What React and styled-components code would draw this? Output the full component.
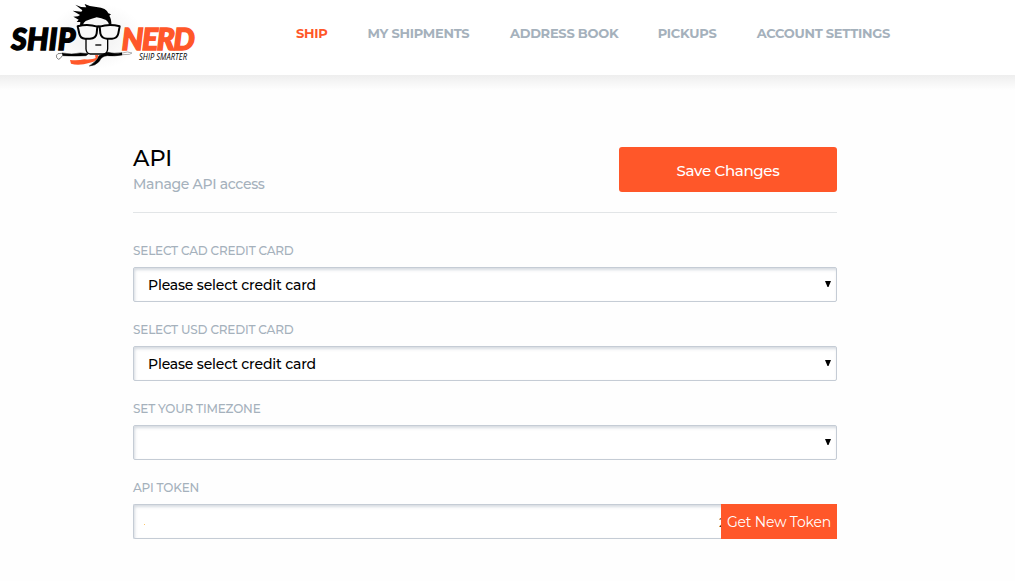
import React from "react";
import styled, { createGlobalStyle } from "styled-components";

const GlobalStyle = createGlobalStyle`
  *, *::before, *::after { box-sizing: border-box; }
  body {
    margin: 0;
    background: #fefefe;
    font-family: Montserrat, Inter, "Liberation Sans", sans-serif;
    color: #000;
  }
`;

const Page = styled.div`
  min-height: 581px;
  overflow: hidden;
`;

const Header = styled.header`
  display: flex;
  align-items: flex-start;
  height: 75px;
  background: #fff;
`;

const HeaderShade = styled.div`
  height: 15px;
  background: linear-gradient(#eeeeee, #fefefe);
`;

const LogoImage = styled.svg`
  display: block;
  flex: none;
  width: 200px;
  height: 75px;
`;

const Nav = styled.nav`
  display: flex;
  gap: 40px;
  margin-left: 96px;
  padding-top: 24px;
`;

const NavLink = styled.a`
  font-size: 13px;
  font-weight: 700;
  line-height: 19px;
  white-space: nowrap;
  width: ${(p) => p.$width}px;
  letter-spacing: -0.27px;
  color: ${(p) => (p.$active ? "#ff5729" : "#a5b1bc")};
`;

const Main = styled.main`
  width: 704px;
  margin: 57px 0 0 133px;
`;

const TitleBar = styled.div`
  display: flex;
  justify-content: space-between;
  height: 66px;
  border-bottom: 1px solid #e2e5e7;
`;

const Title = styled.h1`
  margin: 0;
  font-size: 22.4px;
  font-weight: 500;
  line-height: 22px;
`;

const Subtitle = styled.p`
  margin: 5px 0 0;
  font-size: 14px;
  font-weight: 500;
  line-height: 21px;
  letter-spacing: -0.3px;
  color: #a5b1bc;
`;

const SaveButton = styled.button`
  width: 218px;
  height: 45px;
  padding: 2px 0 0;
  border: 0;
  border-radius: 3px;
  background: #ff5729;
  color: #fff;
  font: 500 15px Montserrat, Inter, sans-serif;
  letter-spacing: -0.32px;
`;

const Field = styled.div`
  display: flex;
  flex-direction: column;
  height: 79px;
`;

const Form = styled.form`
  padding-top: 29px;
`;

const Label = styled.label`
  height: 25px;
  font-size: 12px;
  font-weight: 500;
  line-height: 17px;
  letter-spacing: -0.18px;
  color: #a5b1bc;
`;

const Control = styled.div`
  display: flex;
  align-items: center;
  justify-content: space-between;
  height: 35px;
  padding: 0 5px 0 14px;
  border: 1px solid #c5ccd5;
  border-radius: 2px;
  background: #fff;
  box-shadow: inset 1px 2px 3px rgba(120, 135, 155, 0.3);
  font-size: 14px;
  font-weight: 500;
  letter-spacing: -0.18px;
`;

const TokenControl = styled(Control)`
  padding: 0;
  border-right: 0;
`;

const Caret = styled.svg`
  width: 6px;
  height: 6px;
  margin-bottom: 2px;
`;

const TokenStart = styled.span`
  width: 1px;
  height: 1px;
  margin: 5px 0 0 10px;
  background: #ffc766;
`;

const TokenEnd = styled.span`
  width: 2px;
  margin-left: auto;
  overflow: hidden;
  font-size: 13px;
  font-weight: 400;
  color: #333;
`;

const TokenButton = styled.button`
  width: 116px;
  height: 35px;
  padding: 1px 0 0;
  border: 0;
  background: #ff5729;
  color: #fff;
  font: 400 14px Montserrat, Inter, sans-serif;
  letter-spacing: -0.17px;
  white-space: nowrap;
`;

function Logo() {
  return (
    <LogoImage viewBox="0 0 200 75" role="img" aria-label="Ship Nerd">
      <defs>
        <radialGradient id="halo">
          <stop offset="0.4" stopColor="#f5f5f5" />
          <stop offset="1" stopColor="#fff" />
        </radialGradient>
      </defs>
      <ellipse cx="96" cy="36" rx="47" ry="33" fill="url(#halo)" />
      <g fontFamily="Lato, sans-serif" fontStyle="italic" fontWeight="900" fontSize="30" strokeWidth="1.4">
        <text x="11.3" y="49.7" textLength="64" lengthAdjust="spacing" stroke="#000">SHIP</text>
        <text x="121.8" y="49.7" textLength="73" lengthAdjust="spacing" fill="#ff5729" stroke="#ff5729">NERD</text>
      </g>
      <text x="139" y="60" fontFamily="'Open Sans', sans-serif" fontStyle="italic" fontWeight="500" fontSize="9" textLength="48" lengthAdjust="spacingAndGlyphs">SHIP SMARTER</text>
      <g transform="translate(50 0) scale(.33333)">
        <path d="M108 108V147Q109 161 121 162H160Q172 161 173 147V108" fill="#f8f8f8" stroke="#000" strokeWidth="4" />
        <path d="M90 76L91 66 80 66 86 59 70 50 84 49 90 45 68 32 94 35 97 31 76 14Q94 23 109 22Q106 17 104 12Q119 20 139 21Q170 24 175 40L183 43 178 47Q185 58 184 76L178 76Q177 66 168 60Q154 54 140 52Q122 57 107 63Q101 67 98 76Z" />
        <path d="M83 79Q113 71 142 80L140 100Q138 115 120 116H105Q91 115 88 101ZM149 80Q178 71 209 79L205 100Q202 115 186 116H171Q154 115 151 100Z" fill="#f8f8f8" stroke="#000" strokeWidth="6" strokeLinejoin="round" />
        <path d="M140 81Q146 77 151 81" fill="none" stroke="#000" strokeWidth="7" />
        <path d="M136 135H154" stroke="#000" strokeWidth="4" />
        <path d="M36 159Q66 165 91 159L116 161 108 167Q75 169 37 167Z" stroke="#000" strokeWidth="1.5" />
        <path d="M36 160L24 161Q17 164 20 173Q25 181 30 176L37 167" fill="#fff" stroke="#444" strokeWidth="2" />
        <path d="M158 163L174 157Q190 162 216 158L217 165Q194 169 172 167Q153 169 148 184Q136 198 118 198Q137 187 147 167Z" stroke="#000" strokeWidth="1.5" />
        <path d="M217 159L232 156 246 159 238 163 217 164" fill="#fff" stroke="#888" strokeWidth="2" />
        <path d="M135 166L145 165Q143 184 120 188Q87 198 63 191L60 180Q82 183 103 178Q130 179 137 174Z" fill="#ff5729" />
      </g>
    </LogoImage>
  );
}

function SelectField({ label, value }) {
  return (
    <Field>
      <Label>{label}</Label>
      <Control role="combobox">
        <span>{value}</span>
        <Caret viewBox="0 0 6 6" aria-hidden="true">
          <path d="M0 0H6L3.5 6H2.5Z" />
        </Caret>
      </Control>
    </Field>
  );
}

export default function App() {
  return (
    <Page>
      <GlobalStyle />
      <Header>
        <Logo />
        <Nav>
          <NavLink $active $width={31.5}>SHIP</NavLink>
          <NavLink $width={102.5}>MY SHIPMENTS</NavLink>
          <NavLink $width={107.7}>ADDRESS BOOK</NavLink>
          <NavLink $width={59}>PICKUPS</NavLink>
          <NavLink $width={134}>ACCOUNT SETTINGS</NavLink>
        </Nav>
      </Header>
      <HeaderShade />
      <Main>
        <TitleBar>
          <div>
            <Title>API</Title>
            <Subtitle>Manage API access</Subtitle>
          </div>
          <SaveButton>Save Changes</SaveButton>
        </TitleBar>
        <Form>
          <SelectField label="SELECT CAD CREDIT CARD" value="Please select credit card" />
          <SelectField label="SELECT USD CREDIT CARD" value="Please select credit card" />
          <SelectField label="SET YOUR TIMEZONE" value="" />
          <Field>
            <Label>API TOKEN</Label>
            <TokenControl>
              <TokenStart />
              <TokenEnd>2</TokenEnd>
              <TokenButton type="button">Get New Token</TokenButton>
            </TokenControl>
          </Field>
        </Form>
      </Main>
    </Page>
  );
}
